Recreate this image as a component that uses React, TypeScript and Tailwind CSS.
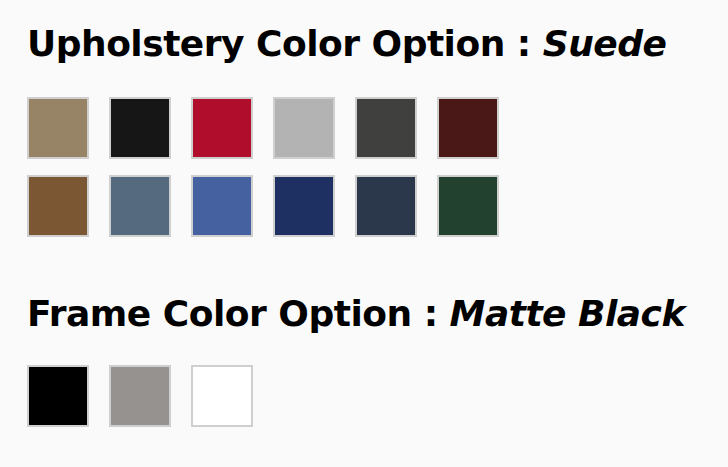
const upholstery = [
  ["#978466", "#161616", "#b00c2c", "#b3b3b3", "#40403e", "#4a1817"],
  ["#7b5734", "#556a7e", "#4661a0", "#1e2f62", "#2b384b", "#23412f"],
]

const frame = ["#000000", "#959290", "#ffffff"]

function Swatch({ color }: { color: string }) {
  return (
    <div
      className="w-[62px] h-[62px] border-2 border-[#cfcfcf] shrink-0"
      style={{ backgroundColor: color }}
    />
  )
}

export default function App() {
  return (
    <div className="w-[728px] h-[467px] bg-[#fafafa] pl-[27px] pt-[22px] font-['DejaVu_Sans','Liberation_Sans',sans-serif] text-black overflow-hidden">
      <h2 className="text-[36px] font-bold leading-[44px] tracking-[-0.5px]">
        Upholstery Color Option : <em className="italic">Suede</em>
      </h2>
      <div className="mt-[31px] flex flex-col gap-[16px]">
        {upholstery.map((row, i) => (
          <div key={i} className="flex gap-[20px]">
            {row.map((c) => (
              <Swatch key={c} color={c} />
            ))}
          </div>
        ))}
      </div>
      <h2 className="mt-[55px] text-[36px] font-bold leading-[44px] tracking-[-0.5px]">
        Frame Color Option : <em className="italic">Matte Black</em>
      </h2>
      <div className="mt-[29px] flex gap-[20px]">
        {frame.map((c) => (
          <Swatch key={c} color={c} />
        ))}
      </div>
    </div>
  )
}
